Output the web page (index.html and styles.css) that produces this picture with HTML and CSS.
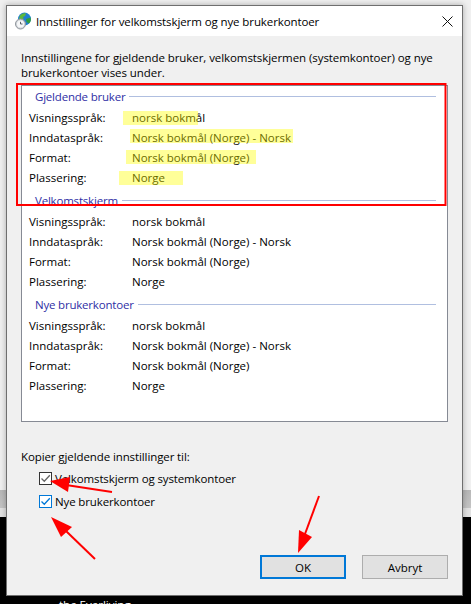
FILE: index.html
```html
<!DOCTYPE html>
<html lang="nb">
<head>
    <meta charset="UTF-8">
    <meta name="viewport" content="width=device-width, initial-scale=1.0">
    <title>Innstillinger for velkomstskjerm og nye brukerkontoer</title>
    <link rel="stylesheet" href="styles.css">
</head>
<body>
    <div class="window">
        <div class="titlebar">
            <svg class="app-icon" width="18" height="18" viewBox="0 0 18 18">
                <circle cx="10.5" cy="7" r="6.5" fill="#1f7fd0"/>
                <path d="M6 3.5c2-2 4-2.500 6-2l-1 2.500-2 1 .5 2-2.500 1-2-1.500z" fill="#5cb83c"/>
                <path d="M12 7l4.500-1.500c.8 2 .3 4.500-1.500 6l-2.500-1.500z" fill="#2f9e3c"/>
                <circle cx="6.500" cy="12" r="5" fill="#d4d8dc" stroke="#8f959b"/>
                <circle cx="6.500" cy="12" r="3.500" fill="#f6f7f8"/>
                <path d="M6.500 9.800V12h2" fill="none" stroke="#5a6068"/>
            </svg>
            <span class="title-text">Innstillinger for velkomstskjerm og nye brukerkontoer</span>
            <svg class="close-icon" width="11" height="11" viewBox="0 0 11 11">
                <path d="M.5.500l10 10M10.500.500l-10 10" fill="none" stroke="#111" stroke-width="1"/>
            </svg>
        </div>

        <div class="dialog">
            <p class="intro">Innstillingene for gjeldende bruker, velkomstskjermen (systemkontoer) og nye brukerkontoer vises under.</p>

            <div class="settings-box">
                <section class="group">
                    <div class="group-head"><span>Gjeldende bruker</span></div>
                    <div class="row"><span class="label">Visningsspråk:</span><span>norsk bokmål</span></div>
                    <div class="row"><span class="label">Inndataspråk:</span><span>Norsk bokmål (Norge) - Norsk</span></div>
                    <div class="row"><span class="label">Format:</span><span>Norsk bokmål (Norge)</span></div>
                    <div class="row"><span class="label">Plassering:</span><span>Norge</span></div>
                </section>
                <section class="group">
                    <div class="group-head"><span>Velkomstskjerm</span></div>
                    <div class="row"><span class="label">Visningsspråk:</span><span>norsk bokmål</span></div>
                    <div class="row"><span class="label">Inndataspråk:</span><span>Norsk bokmål (Norge) - Norsk</span></div>
                    <div class="row"><span class="label">Format:</span><span>Norsk bokmål (Norge)</span></div>
                    <div class="row"><span class="label">Plassering:</span><span>Norge</span></div>
                </section>
                <section class="group">
                    <div class="group-head"><span>Nye brukerkontoer</span></div>
                    <div class="row"><span class="label">Visningsspråk:</span><span>norsk bokmål</span></div>
                    <div class="row"><span class="label">Inndataspråk:</span><span>Norsk bokmål (Norge) - Norsk</span></div>
                    <div class="row"><span class="label">Format:</span><span>Norsk bokmål (Norge)</span></div>
                    <div class="row"><span class="label">Plassering:</span><span>Norge</span></div>
                </section>
            </div>

            <p class="copy-title">Kopier gjeldende innstillinger til:</p>
            <div class="check-row">
                <span class="checkbox">
                    <svg width="11" height="11" viewBox="0 0 11 11"><path d="M1.500 5.500l2.800 2.800 5.500-6" fill="none" stroke="#666" stroke-width="1.300"/></svg>
                </span>
                <span>Velkomstskjerm og systemkontoer</span>
            </div>
            <div class="check-row">
                <span class="checkbox checkbox-focus">
                    <svg width="11" height="11" viewBox="0 0 11 11"><path d="M1.500 5.500l2.800 2.800 5.500-6" fill="none" stroke="#0078d7" stroke-width="1.300"/></svg>
                </span>
                <span>Nye brukerkontoer</span>
            </div>

            <div class="buttons">
                <button class="btn btn-default">OK</button>
                <button class="btn">Avbryt</button>
            </div>
        </div>
    </div>

    <div class="behind-text">the Everliving</div>

    <!-- marks drawn on top of the screenshot -->
    <svg class="marks" width="471" height="604" viewBox="0 0 471 604">
        <g fill="#ffff00" fill-opacity="0.4">
            <rect x="123" y="111" width="75" height="14"/>
            <rect x="130" y="129" width="163" height="14"/>
            <rect x="126" y="150" width="130" height="14"/>
            <rect x="119" y="171" width="64" height="14"/>
        </g>
        <rect x="17" y="84" width="428.500" height="121" fill="none" stroke="#ff0000" stroke-width="2"/>
        <g fill="#ff0000" stroke="#ff0000" stroke-width="2">
            <path d="M112 492L66 485"/>
            <path d="M95 559L66 531"/>
            <path d="M319 496L305 534"/>
        </g>
        <g fill="#ff0000">
            <path d="M50 481L70 477L68 492z"/>
            <path d="M51 517L72 527L61 537z"/>
            <path d="M298 553L312 537L299 530z"/>
        </g>
    </svg>
</body>
</html>
```

FILE: styles.css
```css
html {
    height: 100%;
    background: linear-gradient(#f0f0f0 0, #f0f0f0 490px, #b8b8b8 490px, #c4c4c4 508px, #e2e2e2 508px, #e2e2e2 517px, #000 517px);
}

body {
    margin: 0;
    padding-top: 5px;
    height: 599px;
    overflow: hidden;
    position: relative;
    font-family: "Open Sans", "Noto Sans", sans-serif;
    font-size: 11.5px;
    color: #000;
}

p {
    margin: 0;
}

.window {
    width: 457px;
    height: 591px;
    margin-left: 6px;
    box-sizing: border-box;
    border: 1px solid #6f6f6f;
    background-color: #f0f0f0;
    box-shadow: 0 0 6px rgba(0, 0, 0, 0.3);
    display: flex;
    flex-direction: column;
}

.titlebar {
    height: 30px;
    flex: none;
    background-color: white;
    display: flex;
    align-items: center;
    padding-left: 7px;
    padding-right: 9px;
}

.app-icon {
    margin-right: 4px;
}

.title-text {
    flex: 1;
    letter-spacing: -0.1px;
}

.dialog {
    flex: 1;
    display: flex;
    flex-direction: column;
    padding: 14px 14px 16px;
}

.intro {
    line-height: 15px;
    margin-bottom: 5px;
    letter-spacing: -0.07px;
}

.settings-box {
    height: 337px;
    box-sizing: border-box;
    background-color: white;
    border: 1px solid #868a94;
    padding: 2px 11px 0 7px;
}

.group {
    height: 104px;
}

.group-head {
    height: 16px;
    display: flex;
    align-items: center;
    gap: 4px;
    padding-left: 6px;
    margin-bottom: 3px;
    color: #2f2fa5;
    letter-spacing: -0.2px;
}

.group-head::after {
    content: "";
    flex: 1;
    height: 1px;
    background-color: #b0bfe0;
}

.row {
    height: 20px;
    display: flex;
    align-items: center;
}

.label {
    width: 103px;
}

.copy-title {
    margin-top: 27px;
    line-height: 16px;
    margin-bottom: 2px;
    letter-spacing: -0.1px;
}

.check-row {
    height: 23px;
    display: flex;
    align-items: center;
    gap: 3px;
    padding-left: 18px;
    letter-spacing: -0.13px;
}

.checkbox {
    width: 13px;
    height: 13px;
    box-sizing: border-box;
    border: 1px solid #333;
    background-color: white;
    display: flex;
    align-items: center;
    justify-content: center;
}

.checkbox-focus {
    border-color: #0078d7;
}

.buttons {
    margin-top: auto;
    display: flex;
    justify-content: flex-end;
    gap: 16px;
}

.btn {
    width: 86px;
    height: 24px;
    box-sizing: border-box;
    background-color: #e1e1e1;
    border: 1px solid #adadad;
    font-family: inherit;
    font-size: 11.5px;
    color: #000;
    padding: 0;
}

.btn-default {
    border: 2px solid #0078d7;
}

.behind-text {
    margin-top: 1px;
    padding-left: 59px;
    color: white;
    font-size: 11.5px;
    line-height: 16px;
}

.marks {
    position: absolute;
    top: 0;
    left: 0;
}
```
